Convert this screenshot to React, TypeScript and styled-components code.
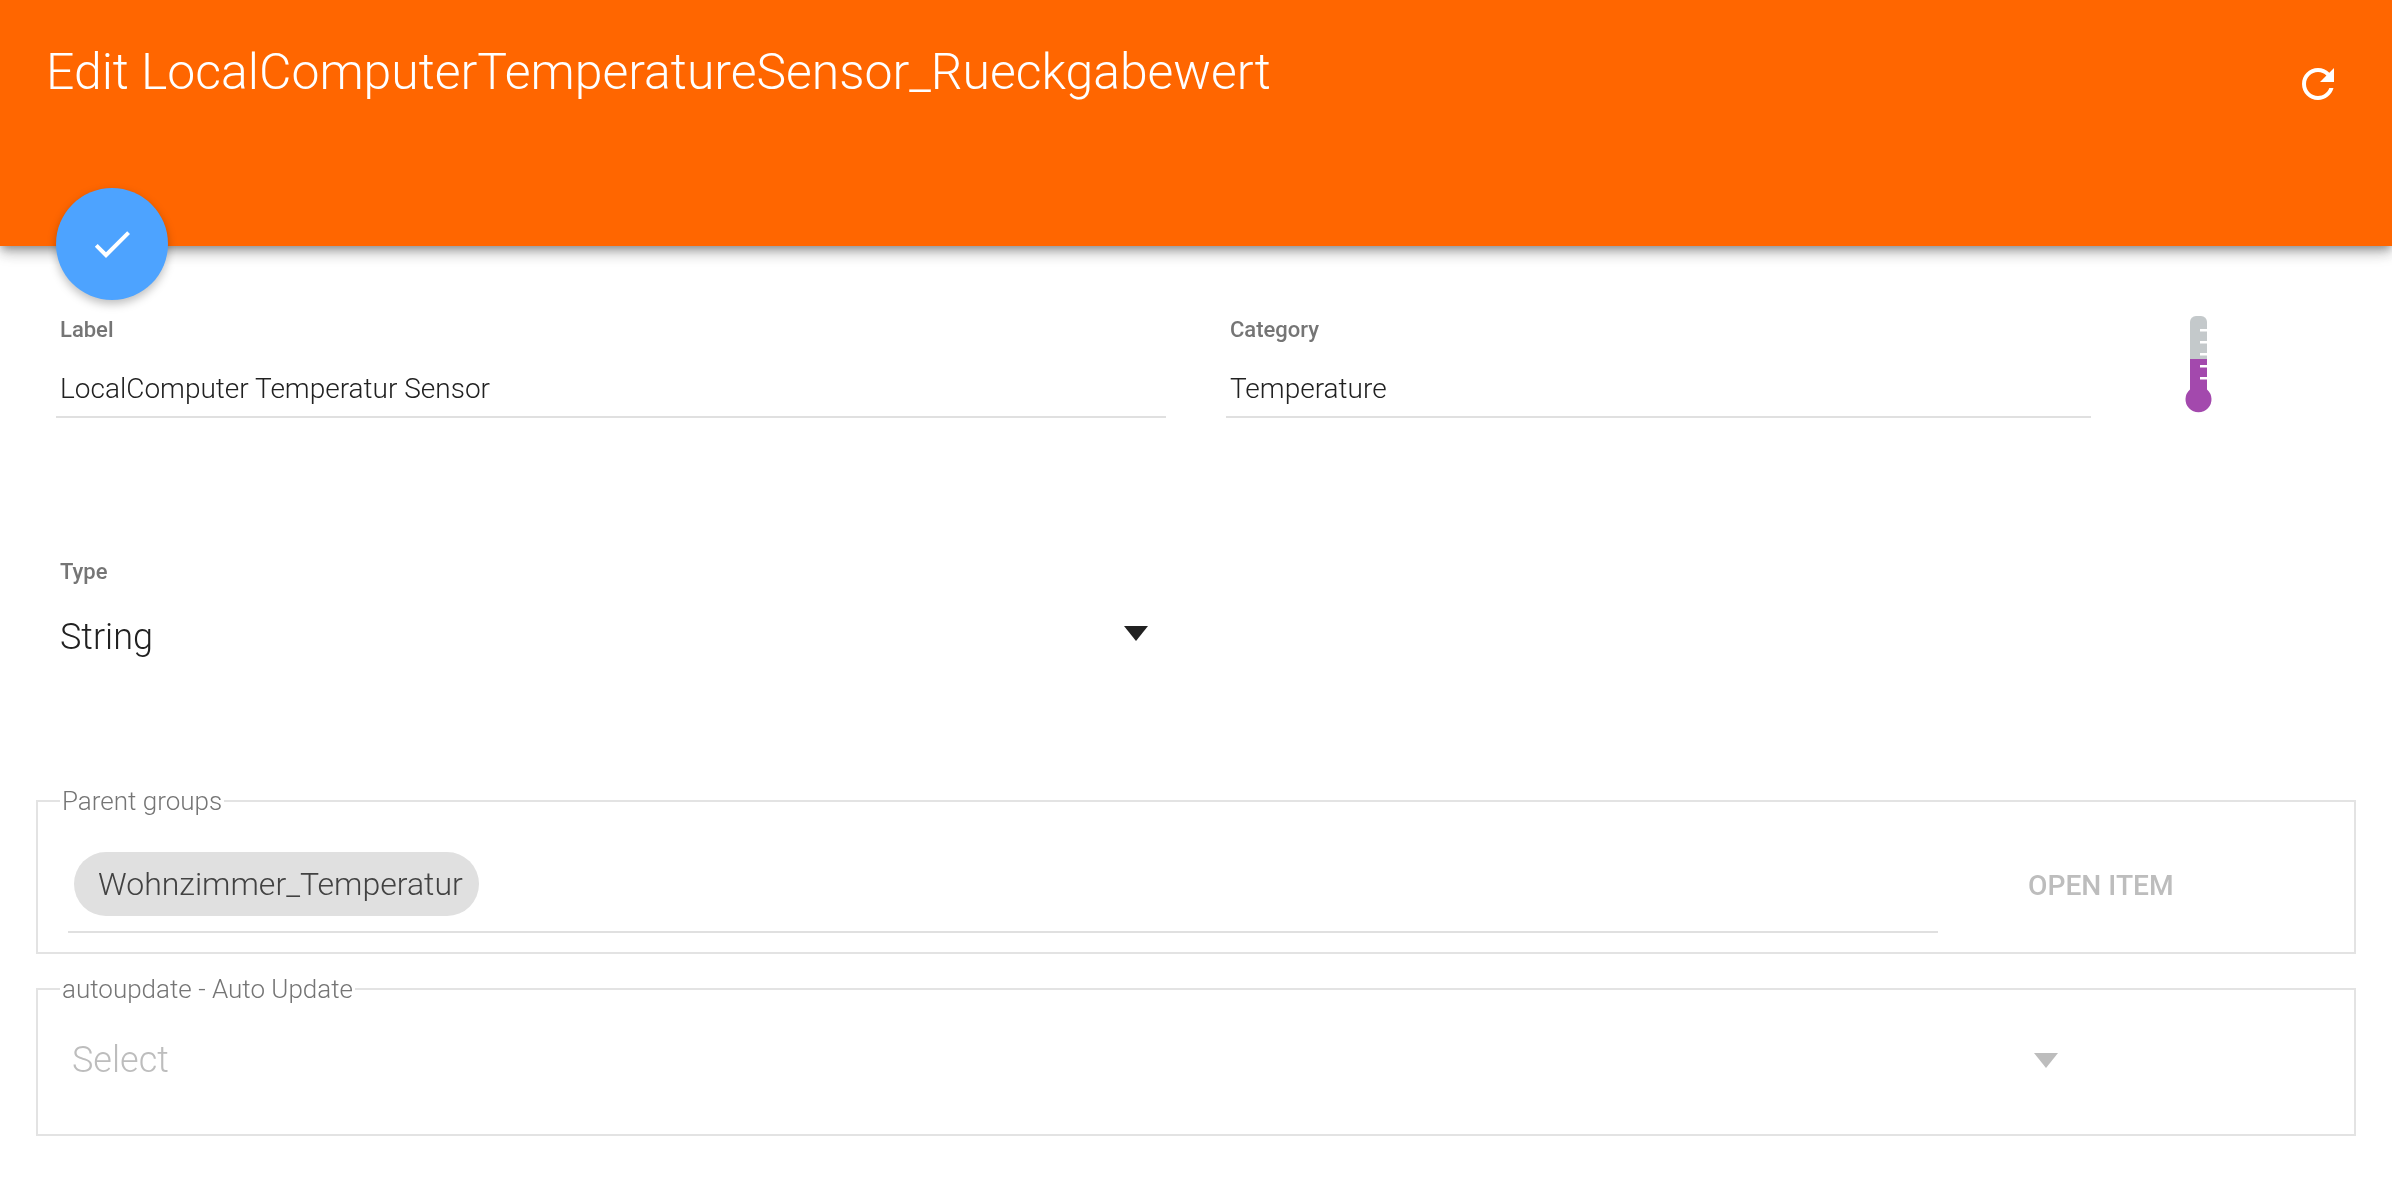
import React from 'react';
import styled, { createGlobalStyle } from 'styled-components';

const GlobalStyle = createGlobalStyle`
  html, body {
    margin: 0;
    padding: 0;
    background: #fff;
    overflow: hidden;
  }
  body {
    font-family: Roboto, 'Liberation Sans', sans-serif;
    font-weight: 300;
  }
`;

const Page = styled.div`
  width: 2392px;
  height: 1182px;
  position: relative;
  overflow: hidden;
  will-change: transform;
`;

const Header = styled.header`
  height: 246px;
  box-sizing: border-box;
  padding: 42px 50px 0 46px;
  display: flex;
  justify-content: space-between;
  align-items: flex-start;
  background: #ff6600;
  box-shadow: 0 4px 8px -2px rgba(0, 0, 0, 0.3), 0 8px 12px rgba(0, 0, 0, 0.18), 0 2px 20px rgba(0, 0, 0, 0.12);
  position: relative;
`;

const Title = styled.h1`
  margin: 0;
  font-size: 49.9px;
  line-height: 60px;
  font-weight: 300;
  color: #fff;
`;

const RefreshIcon = styled.svg`
  width: 48px;
  height: 48px;
  margin-top: 18px;
  fill: #fff;
`;

const Fab = styled.button`
  position: absolute;
  left: 56px;
  top: 188px;
  width: 112px;
  height: 112px;
  padding: 0;
  border: 0;
  border-radius: 50%;
  display: flex;
  align-items: center;
  justify-content: center;
  background: #4da3ff;
  box-shadow: 0 4px 10px rgba(0, 0, 0, 0.26);
`;

const CheckIcon = styled.svg`
  width: 48px;
  height: 48px;
  fill: #fff;
`;

const TopRow = styled.div`
  display: flex;
  padding: 70px 0 0 56px;
`;

const Field = styled.div<{ $width: number; $gap?: number }>`
  width: ${(p) => p.$width}px;
  margin-right: ${(p) => p.$gap ?? 0}px;
  flex: none;
`;

const FieldLabel = styled.label`
  display: block;
  padding-left: 4px;
  font-size: 22px;
  line-height: 28px;
  font-weight: 500;
  color: #757575;
`;

const TextValue = styled.div`
  margin-top: 17px;
  height: 57px;
  box-sizing: border-box;
  padding: 8px 0 0 4px;
  border-bottom: 2px solid #e0e0e0;
  font-size: 28px;
  line-height: 40px;
  font-weight: 300;
  color: #212121;
`;

const CategoryIcon = styled.svg`
  width: 64px;
  height: 128px;
  flex: none;
  margin-top: -16px;
`;

const TypeRow = styled.div`
  padding: 130px 0 0 56px;
`;

const SelectRow = styled.div<{ $width: number }>`
  width: ${(p) => p.$width}px;
  margin-top: 27px;
  display: flex;
  align-items: center;
  justify-content: space-between;
`;

const TypeValue = styled.div`
  padding-left: 4px;
  font-size: 36px;
  line-height: 48px;
  font-weight: 300;
  color: #212121;
`;

const Arrow = styled.span<{ $color: string; $lift?: number }>`
  width: 0;
  height: 0;
  flex: none;
  margin-bottom: ${(p) => p.$lift ?? 0}px;
  border-left: 12.5px solid transparent;
  border-right: 12.5px solid transparent;
  border-top: 15px solid ${(p) => p.$color};
`;

const Group = styled.fieldset<{ $height: number; $top: number }>`
  margin: ${(p) => p.$top}px 36px 0 36px;
  padding: 36px 30px 0 30px;
  height: ${(p) => p.$height}px;
  box-sizing: border-box;
  border: 2px solid #e3e3e3;
  min-width: 0;
`;

const Legend = styled.legend`
  margin-left: -8px;
  padding: 0 2px;
  font-size: 26px;
  line-height: 30px;
  font-weight: 300;
  color: #757575;
`;

const GroupRow = styled.div`
  display: flex;
  align-items: flex-start;
`;

const ChipList = styled.div`
  width: 1870px;
  height: 81px;
  box-sizing: border-box;
  padding-left: 6px;
  border-bottom: 2px solid #e0e0e0;
`;

const Chip = styled.span`
  display: inline-block;
  height: 64px;
  box-sizing: border-box;
  padding: 0 16px 0 24px;
  border-radius: 32px;
  background: #e0e0e0;
  font-size: 32px;
  line-height: 64px;
  font-weight: 300;
  color: #424242;
`;

const OpenButton = styled.button`
  margin: 3px 0 0 90px;
  height: 60px;
  padding: 0;
  border: 0;
  background: none;
  font-family: inherit;
  font-size: 28.2px;
  font-weight: 500;
  color: #bdbdbd;
`;

const SelectBox = styled.div`
  width: 1990px;
  margin-top: -4px;
  display: flex;
  align-items: center;
  justify-content: space-between;
`;

const Placeholder = styled.span`
  padding-left: 4px;
  font-size: 36px;
  line-height: 48px;
  font-weight: 300;
  color: #bdbdbd;
`;

export default function App() {
  return (
    <Page>
      <GlobalStyle />
      <Header>
        <Title>Edit LocalComputerTemperatureSensor_Rueckgabewert</Title>
        <RefreshIcon viewBox="0 0 24 24">
          <path d="M17.65 6.35C16.2 4.9 14.21 4 12 4c-4.42 0-7.99 3.58-7.99 8s3.57 8 7.99 8c3.73 0 6.84-2.55 7.73-6h-2.08c-.82 2.33-3.04 4-5.65 4-3.31 0-6-2.69-6-6s2.69-6 6-6c1.66 0 3.14.69 4.22 1.78L13 11h7V4l-2.35 2.35z" />
        </RefreshIcon>
      </Header>
      <Fab>
        <CheckIcon viewBox="0 0 24 24">
          <path d="M9 16.17L4.83 12l-1.42 1.41L9 19 21 7l-1.41-1.41z" />
        </CheckIcon>
      </Fab>

      <TopRow>
        <Field $width={1110} $gap={60}>
          <FieldLabel>Label</FieldLabel>
          <TextValue>LocalComputer Temperatur Sensor</TextValue>
        </Field>
        <Field $width={865} $gap={76}>
          <FieldLabel>Category</FieldLabel>
          <TextValue>Temperature</TextValue>
        </Field>
        <CategoryIcon viewBox="0 0 64 128">
          <path d="M23 59V22a6 6 0 0 1 6-6h5a6 6 0 0 1 6 6v37z" fill="#c4c9cb" />
          <path d="M23 59h17v30.5A13 13 0 1 1 23 89.5z" fill="#a349ad" />
          <path d="M33 29h7v2.5h-7zM33 41h7v2.5h-7zM33 53h7v2.5h-7zM33 65h7v2.5h-7zM33 77h7v2.5h-7z" fill="#fff" />
        </CategoryIcon>
      </TopRow>

      <TypeRow>
        <FieldLabel>Type</FieldLabel>
        <SelectRow $width={1092}>
          <TypeValue>String</TypeValue>
          <Arrow $color="#212121" $lift={7} />
        </SelectRow>
      </TypeRow>

      <Group $height={168} $top={125}>
        <Legend>Parent groups</Legend>
        <GroupRow>
          <ChipList>
            <Chip>Wohnzimmer_Temperatur</Chip>
          </ChipList>
          <OpenButton>OPEN ITEM</OpenButton>
        </GroupRow>
      </Group>

      <Group $height={162} $top={20}>
        <Legend>autoupdate - Auto Update</Legend>
        <SelectBox>
          <Placeholder>Select</Placeholder>
          <Arrow $color="#bdbdbd" />
        </SelectBox>
      </Group>
    </Page>
  );
}
